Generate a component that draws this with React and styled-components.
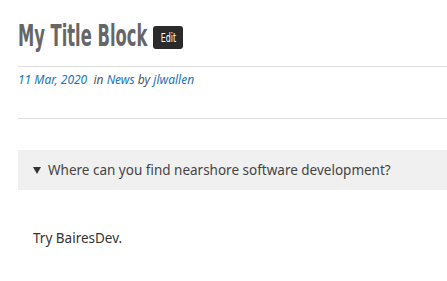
import React from 'react';
import styled, { createGlobalStyle } from 'styled-components';

const GlobalStyle = createGlobalStyle`
  html, body { margin: 0; padding: 0; background: #fff; }
  body { font-family: "Noto Sans", "Open Sans", sans-serif; }
`;

const Page = styled.div`
  width: 446px;
  height: 281px;
  border-right: 1px solid #ddd;
  padding-left: 18px;
  box-sizing: content-box;
  overflow: hidden;
`;

const Header = styled.header`
  display: flex;
  align-items: center;
  gap: 5px;
  height: 66px;
  box-sizing: border-box;
  padding-top: 5px;
`;

const Title = styled.h1`
  margin: 0;
  width: 130px;
  white-space: nowrap;
  font-family: "DejaVu Sans Condensed", "DejaVu Sans", sans-serif;
  font-stretch: condensed;
  font-weight: bold;
  font-size: 30px;
  color: #666;
`;

// the reference face is much narrower than anything installed
const Squeezed = styled.span`
  display: inline-block;
  transform: scaleX(${p => p.$scale});
  transform-origin: ${p => p.$origin || 'center'};
`;

const EditButton = styled.span`
  display: inline-flex;
  align-items: center;
  justify-content: center;
  width: 30px;
  height: 23px;
  margin-top: 3px;
  background: #2a2a2a;
  border-radius: 3px;
  color: #fff;
  font-family: "DejaVu Sans Condensed", "DejaVu Sans", sans-serif;
  font-stretch: condensed;
  font-size: 13px;
`;

const Meta = styled.div`
  border-top: 1px solid #ddd;
  height: 52px;
  box-sizing: border-box;
  padding-top: 4px;
  font-size: 12px;
  font-style: italic;
  color: #555;
`;

const MetaLink = styled.a`
  color: #1b74b8;
  text-decoration: none;
`;

const Content = styled.section`
  border-top: 1px solid #ddd;
  padding-top: 31px;
`;

const Summary = styled.div`
  display: flex;
  align-items: center;
  gap: 7px;
  height: 40px;
  padding-left: 15px;
  background: #f0f0f0;
  margin-right: 1px;
  font-size: 13.5px;
  color: #444;
`;

const Arrow = styled.span`
  width: 0;
  height: 0;
  border-left: 4px solid transparent;
  border-right: 4px solid transparent;
  border-top: 7px solid #333;
`;

const Answer = styled.p`
  margin: 0;
  padding: 39px 0 0 15px;
  font-size: 13.5px;
  color: #333;
`;

export default function App() {
  return (
    <>
      <GlobalStyle />
      <Page>
        <Header>
          <Title>
            <Squeezed $scale={0.605} $origin="left center">My Title Block</Squeezed>
          </Title>
          <EditButton>
            <Squeezed $scale={0.68}>Edit</Squeezed>
          </EditButton>
        </Header>
        <Meta>
          <MetaLink href="#">11 Mar, 2020</MetaLink>&nbsp; in <MetaLink href="#">News</MetaLink> by <MetaLink href="#">jlwallen</MetaLink>
        </Meta>
        <Content>
          <Summary>
            <Arrow />
            Where can you find nearshore software development?
          </Summary>
          <Answer>Try BairesDev.</Answer>
        </Content>
      </Page>
    </>
  );
}
